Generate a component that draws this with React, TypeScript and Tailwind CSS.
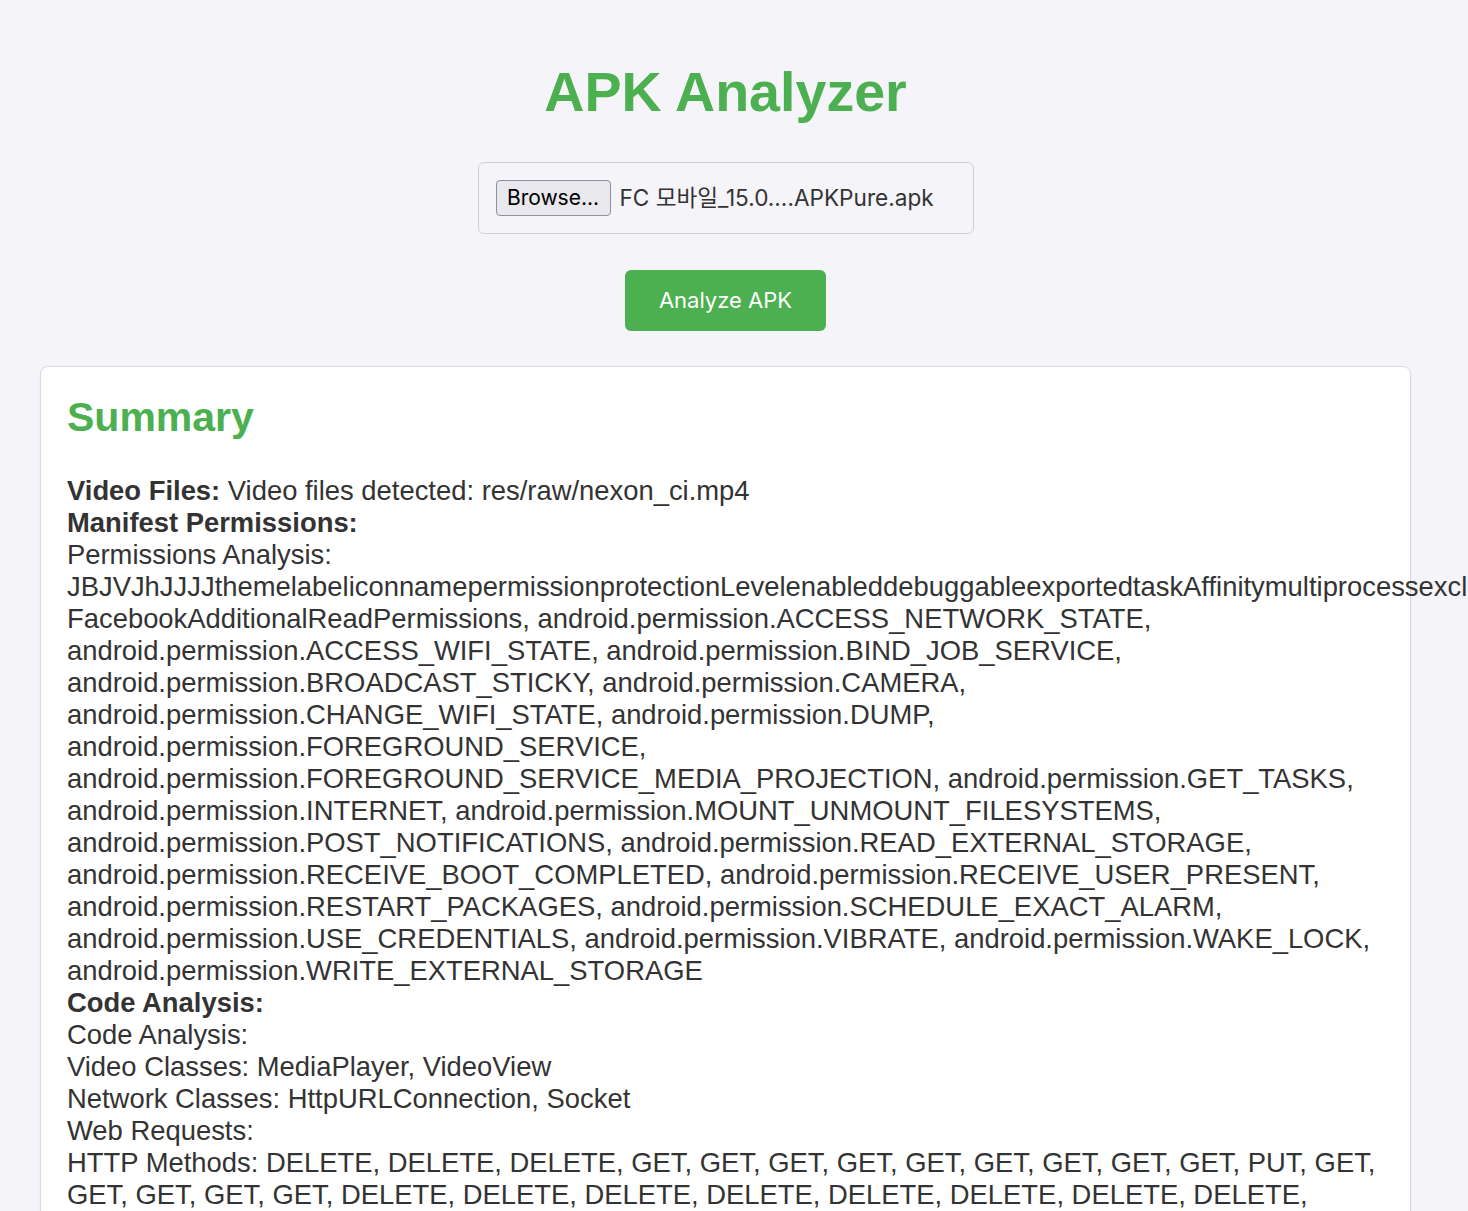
const PERMISSIONS = [
  'android.permission.ACCESS_NETWORK_STATE',
  'android.permission.ACCESS_WIFI_STATE',
  'android.permission.BIND_JOB_SERVICE',
  'android.permission.BROADCAST_STICKY',
  'android.permission.CAMERA',
  'android.permission.CHANGE_WIFI_STATE',
  'android.permission.DUMP',
  'android.permission.FOREGROUND_SERVICE',
  'android.permission.FOREGROUND_SERVICE_MEDIA_PROJECTION',
  'android.permission.GET_TASKS',
  'android.permission.INTERNET',
  'android.permission.MOUNT_UNMOUNT_FILESYSTEMS',
  'android.permission.POST_NOTIFICATIONS',
  'android.permission.READ_EXTERNAL_STORAGE',
  'android.permission.RECEIVE_BOOT_COMPLETED',
  'android.permission.RECEIVE_USER_PRESENT',
  'android.permission.RESTART_PACKAGES',
  'android.permission.SCHEDULE_EXACT_ALARM',
  'android.permission.USE_CREDENTIALS',
  'android.permission.VIBRATE',
  'android.permission.WAKE_LOCK',
  'android.permission.WRITE_EXTERNAL_STORAGE',
];

const JUNK =
  'JBJVJhJJJJthemelabeliconnamepermissionprotectionLevelenableddebuggableexportedtaskAffinitymultiprocessexcludeFromRecentsscreenOrientationconfigChangeslaunchModewindowSoftInputMode';

const HTTP_METHODS = [
  'DELETE', 'DELETE', 'DELETE', 'GET', 'GET', 'GET', 'GET', 'GET', 'GET', 'GET', 'GET', 'GET', 'PUT', 'GET',
  'GET', 'GET', 'GET', 'GET', 'DELETE', 'DELETE', 'DELETE', 'DELETE', 'DELETE', 'DELETE', 'DELETE', 'DELETE',
  'DELETE', 'GET', 'POST', 'GET', 'PUT', 'GET', 'DELETE', 'GET', 'GET', 'POST', 'GET', 'GET', 'GET', 'PUT',
];

export default function App() {
  return (
    <div className="min-h-screen bg-[#f4f4f9] overflow-x-hidden font-['Liberation_Sans',Arial,sans-serif] text-[#333]">
      <div className="w-[1451px] px-10 pt-[64px] pb-10 flex flex-col items-center">
        <h1 className="text-[55.6px] leading-[56px] font-bold text-[#4caf50]">APK Analyzer</h1>

        <div className="mt-[42px] w-[496px] h-[72px] border border-[#cfcfd6] rounded-md px-[17px] flex items-center gap-[9px] font-['Inter','Noto_Sans_CJK_KR',sans-serif]">
          <button className="h-9 w-[115px] bg-[#e9e9ed] border border-[#8f8f9d] rounded text-[21px] text-black">
            Browse...
          </button>
          <span className="text-[22.6px] text-[#333]">FC 모바일_15.0....APKPure.apk</span>
        </div>

        <button className="mt-9 w-[201px] h-[61px] bg-[#4caf50] rounded-md text-white text-[22px] font-['Inter',sans-serif]">
          Analyze APK
        </button>

        <div className="mt-[35px] self-stretch bg-white border border-[#d9d9de] rounded-lg px-[26px] pt-[30px] pb-8 shadow-[0_1px_3px_rgba(0,0,0,0.06)]">
          <h2 className="text-[41px] leading-none font-bold text-[#4caf50]">Summary</h2>

          <div className="mt-[37px] text-[27.4px] leading-[32px]">
            <strong>Video Files:</strong> Video files detected: res/raw/nexon_ci.mp4
            <br />
            <strong>Manifest Permissions:</strong>
            <br />
            Permissions Analysis:
            <br />
            {JUNK}, FacebookAdditionalReadPermissions, {PERMISSIONS.join(', ')}
            <br />
            <strong>Code Analysis:</strong>
            <br />
            Code Analysis:
            <br />
            Video Classes: MediaPlayer, VideoView
            <br />
            Network Classes: HttpURLConnection, Socket
            <br />
            Web Requests:
            <br />
            HTTP Methods: {HTTP_METHODS.join(', ')}
          </div>
        </div>
      </div>
    </div>
  );
}
